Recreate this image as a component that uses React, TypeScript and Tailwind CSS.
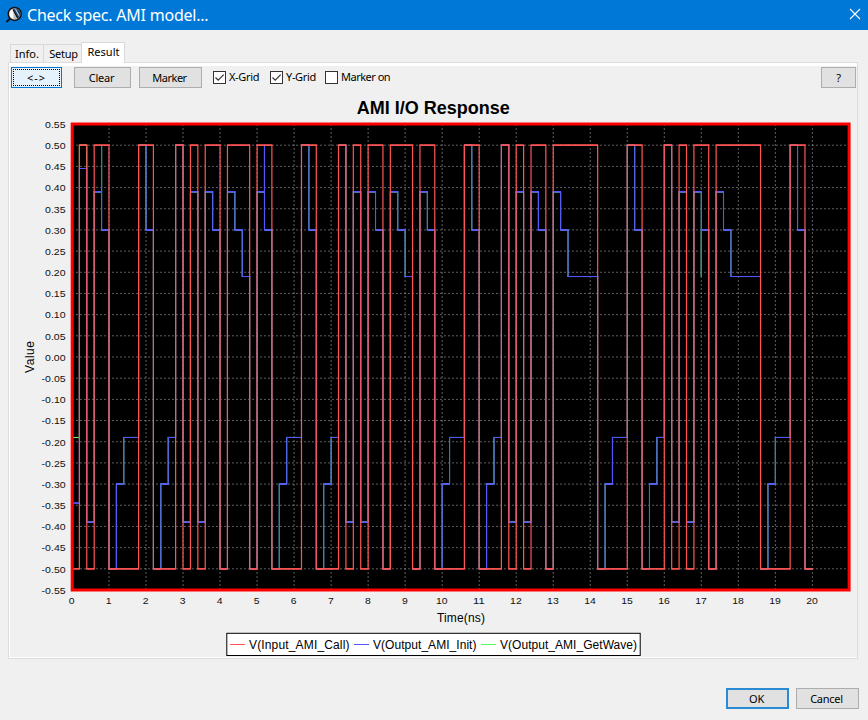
import clsx from 'clsx'
import { useState } from 'react'
import type { ReactNode } from 'react'

type Point = [number, number]

const LEFT = 71.97
const RIGHT = 849.3
const TOP = 124
const BOTTOM = 590
const BIT = 0.2
const BIT_COUNT = 100

// Times (ns) at which the input toggles, starting from low
const TOGGLES = [
  0.2, 0.4, 0.6, 1.0, 1.8, 2.2, 2.8, 3.0, 3.2, 3.4, 3.6, 4.0, 4.2, 4.8, 5.0, 5.4, 6.2, 6.6, 7.2,
  7.4, 7.6, 7.8, 8.0, 8.4, 8.6, 9.2, 9.4, 9.8, 10.6, 11.0, 11.6, 11.8, 12.0, 12.2, 12.4, 12.8, 13.0,
  14.2, 15.0, 15.4, 16.0, 16.2, 16.4, 16.6, 16.8, 17.2, 17.4, 18.6, 19.4, 19.8,
]

// Equalizer taps
const TAPS = [0.345, -0.1, -0.055]

// Glitches at the bit boundary, keyed by bit index
const GLITCHES: Record<number, number> = { 4: 0.5, 26: 0.5, 85: 0.19 }

const xAt = (t: number) => LEFT + t * 37.02
const yAt = (v: number) => 357 - v * 423.6

const bits = Array.from({ length: BIT_COUNT }, (_, i) => {
  const t = (i + 0.5) * BIT
  return TOGGLES.filter((toggle) => toggle < t).length % 2 ? 1 : -1
})

function filtered(idle: number) {
  return bits.map((_, i) =>
    TAPS.reduce((sum, tap, k) => sum + tap * (i - k >= 0 ? bits[i - k] : idle), 0)
  )
}

function toPoints(levels: number[], glitches: Record<number, number> = {}) {
  const points: Point[] = []
  levels.forEach((level, i) => {
    if (glitches[i] !== undefined) points.push([i * BIT, glitches[i]])
    points.push([i * BIT, level], [(i + 1) * BIT, level])
  })
  return points.map(([t, v]) => `${xAt(t).toFixed(2)},${yAt(v).toFixed(2)}`).join(' ')
}

function toPlateaus(levels: number[]) {
  return levels
    .map((v, i) => {
      const y = yAt(v).toFixed(2)
      return `M${(xAt(i * BIT) - 0.4).toFixed(2)} ${y}H${(xAt((i + 1) * BIT) + 0.4).toFixed(2)}`
    })
    .join('')
}

const inputLevels = bits.map((bit) => bit * 0.5)

const SERIES = [
  { name: 'getwave', color: '#55ff55', levels: filtered(-1), glitches: GLITCHES, width: 1 },
  { name: 'init', color: '#5555ff', levels: filtered(0), glitches: GLITCHES, width: 1.1 },
  { name: 'input', color: '#ff5555', levels: inputLevels, glitches: {}, width: 1.2 },
].map(({ levels, glitches, ...series }) => ({
  ...series,
  points: toPoints(levels, glitches),
  plateaus: toPlateaus(levels),
}))

const xTicks = Array.from({ length: 21 }, (_, i) => i)
const yTicks = Array.from({ length: 23 }, (_, i) => (55 - i * 5) / 100)

const LEGEND = [
  { label: 'V(Input_AMI_Call)', color: '#ff5555', x: 230, width: 100.5 },
  { label: 'V(Output_AMI_Init)', color: '#5555ff', x: 354, width: 103.5 },
  { label: 'V(Output_AMI_GetWave)', color: '#55ff55', x: 481, width: 137 },
]

function ResponseChart({ xGrid, yGrid }: { xGrid: boolean; yGrid: boolean }) {
  return (
    <svg
      width="847"
      height="566"
      viewBox="10 91 847 566"
      className="block font-['Liberation_Sans',Arial,sans-serif] tracking-normal"
    >
      <text x="433.3" y="114" textAnchor="middle" fontSize="18" fontWeight="700" textLength="153">
        AMI I/O Response
      </text>
      <rect x={LEFT} y={TOP} width={RIGHT - LEFT} height={BOTTOM - TOP} fill="#000" />

      <g stroke="#c0c0c0" strokeWidth="0.5" strokeDasharray="2 2">
        {xGrid &&
          xTicks
            .slice(1)
            .map((t) => <line key={t} x1={xAt(t)} x2={xAt(t)} y1={BOTTOM} y2={TOP} />)}
        {yGrid &&
          yTicks
            .slice(1, -1)
            .map((v) => <line key={v} x1={LEFT} x2={RIGHT} y1={yAt(v)} y2={yAt(v)} />)}
      </g>

      {SERIES.map(({ name, color, width, points, plateaus }) => (
        <g key={name} fill="none" stroke={color}>
          <polyline points={points} strokeWidth={width} />
          <path d={plateaus} />
          <path d={plateaus} />
        </g>
      ))}
      <rect
        x={LEFT + 0.2}
        y={TOP}
        width={RIGHT - LEFT - 0.4}
        height={BOTTOM - TOP}
        fill="none"
        stroke="#f00"
        strokeWidth="3"
      />

      <g fontSize="9.5" fill="#111">
        {yTicks.map((v) => (
          <text
            key={v}
            x="65.6"
            y={yAt(v) + 3.8}
            textAnchor="end"
            textLength={v < 0 ? 24 : 20.5}
            lengthAdjust="spacingAndGlyphs"
          >
            {v.toFixed(2)}
          </text>
        ))}
        {xTicks.map((t) => (
          <text
            key={t}
            x={xAt(t) - 0.3}
            y="604"
            textAnchor="middle"
            textLength={t > 9 ? 11.6 : 5.8}
            lengthAdjust="spacingAndGlyphs"
          >
            {t}
          </text>
        ))}
      </g>
      <text x="461" y="622" textAnchor="middle" fontSize="12" textLength="48">
        Time(ns)
      </text>
      <text transform="translate(34 357) rotate(-90)" textAnchor="middle" fontSize="12" textLength="32">
        Value
      </text>

      <rect x="226.8" y="633.3" width="413.4" height="22.2" fill="#fff" stroke="#000" />
      {LEGEND.map(({ label, color, x, width }) => (
        <g key={label}>
          <line x1={x} x2={x + 15} y1="644.5" y2="644.5" stroke={color} />
          <text x={x + 19} y="649" fontSize="12" textLength={width}>
            {label}
          </text>
        </g>
      ))}
    </svg>
  )
}

function PushButton({ className, children }: { className?: string; children: ReactNode }) {
  return (
    <button
      className={clsx(
        'flex h-[21px] shrink-0 items-center justify-center border bg-[#e1e1e1] leading-none',
        className
      )}
    >
      {children}
    </button>
  )
}

interface CheckProps {
  label: string
  checked: boolean
  onChange: (checked: boolean) => void
  className?: string
}

function Check({ label, checked, onChange, className }: CheckProps) {
  return (
    <button
      role="checkbox"
      aria-checked={checked}
      onClick={() => onChange(!checked)}
      className={clsx('flex shrink-0 items-center gap-[3px] whitespace-nowrap', className)}
    >
      <span className="size-[13px] border border-[#333] bg-white">
        {checked && (
          <svg viewBox="0 0 11 11" className="size-[11px]" fill="none" stroke="#333">
            <path d="M1.5 5.5 4.2 8.2 9.7 2.7" strokeWidth="1.2" />
          </svg>
        )}
      </span>
      <span>{label}</span>
    </button>
  )
}

function AppIcon() {
  return (
    <svg width="17" height="17" viewBox="0 0 17 17" className="-mt-0.5 shrink-0">
      <path d="M.5 16 4.5 12" stroke="#111" strokeWidth="1.8" />
      <circle cx="8.7" cy="7.9" r="6.5" fill="#b9bdc2" stroke="#111" strokeWidth="1.5" />
      <path d="M7.2 3A5.2 5.2 0 0 0 7.5 13Z" fill="#fff" />
      <path d="M7.4 3.2 12 12.3A5.4 5.4 0 0 0 12.2 3.6L10 3Z" fill="#164477" />
      <path d="M7 3.5 11.8 12.2" stroke="#111" strokeWidth="1.3" />
      <path d="M9.5 3.2 13.2 9.8" stroke="#ccc" strokeWidth="1.1" />
    </svg>
  )
}

export default function App() {
  const [xGrid, setXGrid] = useState(true)
  const [yGrid, setYGrid] = useState(true)
  const [markerOn, setMarkerOn] = useState(false)

  return (
    <div className="flex h-[720px] w-[868px] flex-col overflow-hidden bg-[#f0f0f0] font-['Noto_Sans',sans-serif] text-[11px] tracking-[-0.25px] text-black">
      <header className="flex h-[30px] shrink-0 items-center bg-[#0078d7] pr-[7px] pl-[6px] text-white">
        <AppIcon />
        <h1 className="ml-1 text-[16px] leading-none tracking-[-0.23px]">Check spec. AMI model...</h1>
        <svg width="12" height="12" viewBox="0 0 12 12" className="-mt-0.5 ml-auto" stroke="#fff">
          <path d="M1 1 11 11M11 1 1 11" strokeWidth="1.1" />
        </svg>
      </header>

      <nav className="flex h-8 shrink-0 items-end pl-[10px] leading-none">
        <div className="flex h-[18px] w-[34px] items-center justify-center border border-b-0 border-[#d9d9d9] tracking-normal">
          Info.
        </div>
        <div className="flex h-[18px] w-[37px] items-center justify-center border-t border-[#d9d9d9] pl-0.5">
          Setup
        </div>
        <div className="z-10 -mb-px flex h-[21px] w-11 items-center justify-center border border-b-0 border-[#d9d9d9] bg-white pb-[3px] pl-px tracking-normal">
          Result
        </div>
      </nav>

      <main className="ml-2 h-[597px] w-[850px] shrink-0 border border-[#dcdcdc] bg-white pt-[3px] pl-px">
        <div className="h-[591px] bg-[#f0f0f0]">
          <div className="flex h-[25px] items-center px-px pt-px pb-[3px]">
            <PushButton className="w-[51px] border-[#0078d7] bg-[#e5f1fb] p-px tracking-[1px]">
              <span className="flex size-full items-center justify-center border border-dotted border-black">
                &lt;-&gt;
              </span>
            </PushButton>
            <PushButton className="ml-3 w-[57px] border-[#adadad] pr-0.5">Clear</PushButton>
            <PushButton className="ml-2 w-[63px] border-[#adadad] pr-0.5 tracking-[-0.5px]">
              Marker
            </PushButton>
            <Check
              label="X-Grid"
              checked={xGrid}
              onChange={setXGrid}
              className="ml-[11px] w-[57px] tracking-[-0.35px]"
            />
            <Check
              label="Y-Grid"
              checked={yGrid}
              onChange={setYGrid}
              className="w-[55px] tracking-[-0.35px]"
            />
            <Check
              label="Marker on"
              checked={markerOn}
              onChange={setMarkerOn}
              className="tracking-[-0.5px]"
            />
            <PushButton className="ml-auto w-[35px] border-[#adadad]">?</PushButton>
          </div>
          <ResponseChart xGrid={xGrid} yGrid={yGrid} />
        </div>
      </main>

      <footer className="flex justify-end gap-[7px] pt-[29px] pr-[9px]">
        <PushButton className="w-[63px] border-2 border-[#2a8ad4] pr-0.5">OK</PushButton>
        <PushButton className="w-[63px] border-[#adadad] pr-0.5">Cancel</PushButton>
      </footer>
    </div>
  )
}
